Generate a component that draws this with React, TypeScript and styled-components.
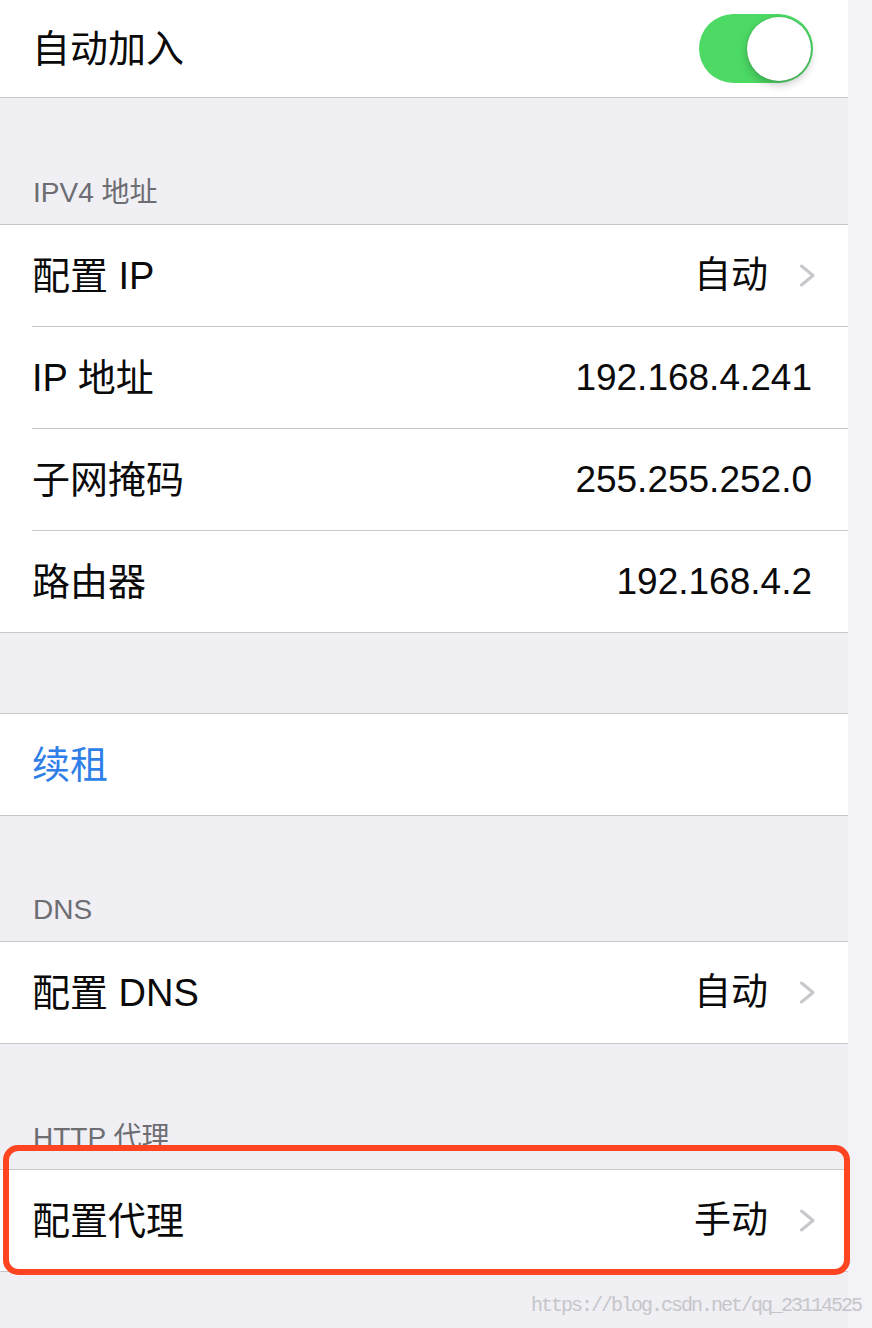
import React from "react";
import styled, { createGlobalStyle } from "styled-components";

const GlobalStyle = createGlobalStyle`
  html, body {
    margin: 0;
    padding: 0;
    background: #efeff4;
  }
  body {
    font-family: "Liberation Sans", "Noto Sans CJK SC", sans-serif;
    -webkit-font-smoothing: antialiased;
  }
`;

const Page = styled.div`
  position: relative;
  display: flex;
  width: 872px;
  min-height: 1328px;
  background: #efeff4;
`;

const Main = styled.div`
  width: 848px;
  display: flex;
  flex-direction: column;
`;

const Edge = styled.div`
  flex: 1;
  background: #f3f3f7;
`;

const Group = styled.div<{ $top?: boolean }>`
  background: #fff;
  border-top: ${(p) => (p.$top ? "none" : "1px solid #c8c7cc")};
  border-bottom: 1px solid #c8c7cc;
`;

const Row = styled.div`
  padding-left: 32px;
  &:last-child > div {
    border-bottom: none;
  }
`;

const RowInner = styled.div<{ $h?: number; $nav?: boolean }>`
  display: flex;
  align-items: center;
  height: ${(p) => p.$h ?? 101}px;
  padding-right: ${(p) => (p.$nav ? 34 : 36)}px;
  border-bottom: 1px solid #c8c7cc;
`;

const Label = styled.span<{ $action?: boolean }>`
  flex: 1;
  font-size: 38px;
  line-height: 44px;
  color: ${(p) => (p.$action ? "#2f7fe8" : "#0a0a0a")};
  white-space: nowrap;
`;

const Value = styled.span`
  font-size: 37px;
  line-height: 44px;
  color: #0a0a0a;
  white-space: nowrap;
`;

const Chevron = styled.svg`
  width: 17px;
  height: 23px;
  margin-left: 31px;
  margin-right: -2px;
  flex: none;
`;

const Header = styled.div<{ $h?: number }>`
  height: ${(p) => p.$h ?? 125}px;
  display: flex;
  align-items: flex-end;
  box-sizing: border-box;
  padding: 0 33px 15px;
  font-size: 28px;
  line-height: 32px;
  color: #6d6d72;
  white-space: nowrap;
`;

const Spacer = styled.div<{ $h: number }>`
  height: ${(p) => p.$h}px;
`;

const Switch = styled.div<{ $on: boolean }>`
  position: relative;
  width: 114px;
  height: 69px;
  border-radius: 35px;
  background: ${(p) => (p.$on ? "#4cd964" : "#e5e5ea")};
  flex: none;
  margin-right: -1px;
`;

const Knob = styled.div`
  position: absolute;
  top: 3px;
  right: 2px;
  width: 64px;
  height: 64px;
  border-radius: 50%;
  background: #fff;
  box-shadow: 0 4px 8px rgba(0, 0, 0, 0.22), 0 0 1px rgba(0, 0, 0, 0.3);
`;

const Highlighted = styled.div`
  position: relative;
`;

const Marker = styled.div`
  position: absolute;
  left: 3px;
  top: 101px;
  width: 847px;
  height: 130px;
  box-sizing: border-box;
  border: 6px solid #ff4422;
  border-radius: 15px;
  pointer-events: none;
`;

const Watermark = styled.div`
  position: absolute;
  right: 11px;
  top: 1294px;
  font-family: "Liberation Mono", monospace;
  font-size: 20px;
  line-height: 24px;
  letter-spacing: -2px;
  color: #c6c6ca;
  white-space: nowrap;
`;

function ChevronIcon() {
  return (
    <Chevron viewBox="0 0 17 23">
      <polyline
        points="2.5,2 14,11.5 2.5,21"
        fill="none"
        stroke="#c7c7cc"
        strokeWidth="3"
        strokeLinecap="round"
        strokeLinejoin="round"
      />
    </Chevron>
  );
}

type Item = { label: string; value?: string; nav?: boolean; action?: boolean };

function Cell({ label, value, nav, action }: Item) {
  return (
    <Row>
      <RowInner $nav={nav}>
        <Label $action={action}>{label}</Label>
        {value && <Value>{value}</Value>}
        {nav && <ChevronIcon />}
      </RowInner>
    </Row>
  );
}

const ipv4: Item[] = [
  { label: "配置 IP", value: "自动", nav: true },
  { label: "IP 地址", value: "192.168.4.241" },
  { label: "子网掩码", value: "255.255.252.0" },
  { label: "路由器", value: "192.168.4.2" },
];

export default function App() {
  return (
    <>
      <GlobalStyle />
      <Page>
        <Main>
          <Group $top>
            <Row>
              <RowInner $h={97}>
                <Label>自动加入</Label>
                <Switch $on>
                  <Knob />
                </Switch>
              </RowInner>
            </Row>
          </Group>

          <Header $h={126}>IPV4 地址</Header>
          <Group>
            {ipv4.map((it) => (
              <Cell key={it.label} {...it} />
            ))}
          </Group>

          <Spacer $h={80} />
          <Group>
            <Cell label="续租" action />
          </Group>

          <Header>DNS</Header>
          <Group>
            <Cell label="配置 DNS" value="自动" nav />
          </Group>

          <Highlighted>
            <Header>HTTP 代理</Header>
            <Group>
              <Cell label="配置代理" value="手动" nav />
            </Group>
            <Marker />
          </Highlighted>
        </Main>
        <Edge />
        <Watermark>https://blog.csdn.net/qq_23114525</Watermark>
      </Page>
    </>
  );
}
